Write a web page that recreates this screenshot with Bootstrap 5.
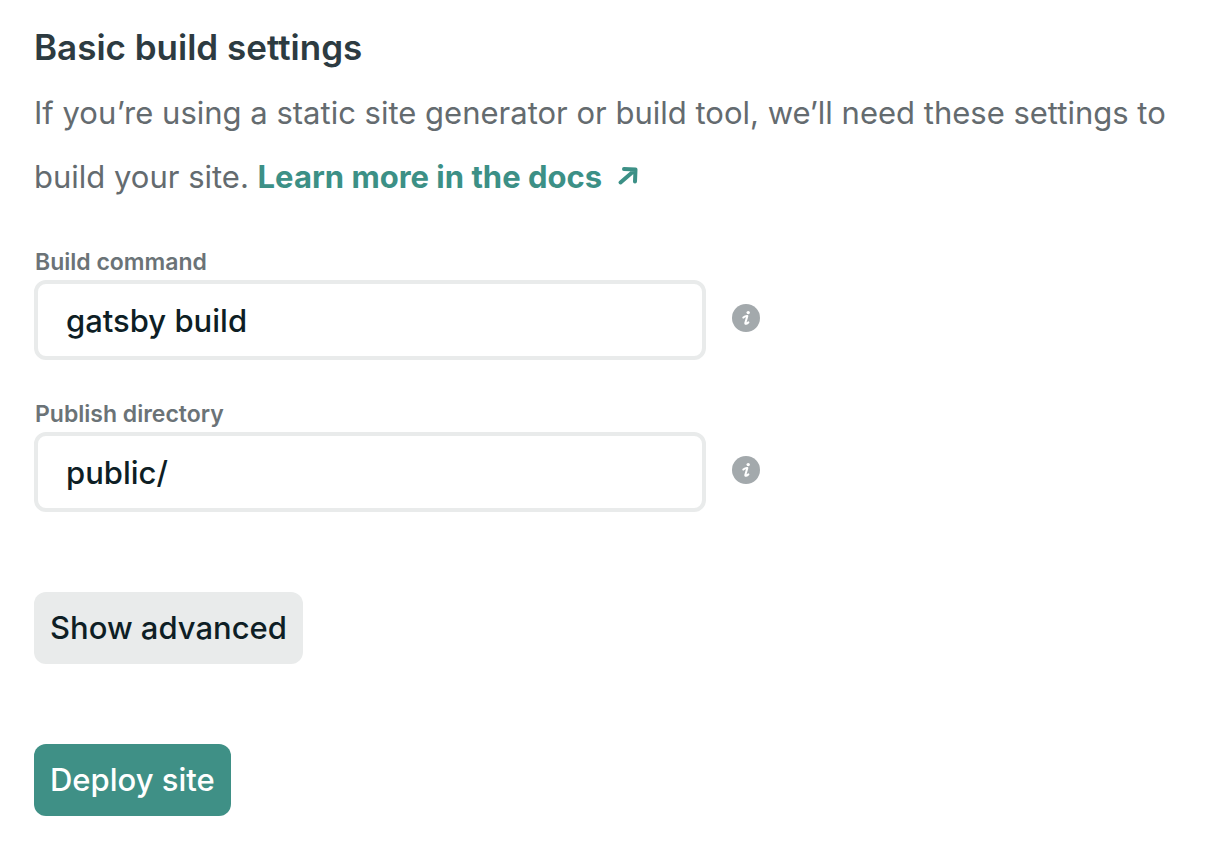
<!DOCTYPE html>
<html lang="en">
<head>
<meta charset="utf-8">
<meta name="viewport" content="width=device-width, initial-scale=1">
<title>Basic build settings</title>
<link href="https://cdn.jsdelivr.net/npm/bootstrap@5.3.0/dist/css/bootstrap.min.css" rel="stylesheet">
<style>
body{font-family:Inter,"Liberation Sans",sans-serif;font-size:31px;color:#646b6f;background:#fff}
.settings{padding:16px 34px 32px}
.settings-title{font-size:35px;line-height:62px;font-weight:600;color:#2d3b41;margin-bottom:3px}
.settings-intro{line-height:64px;margin:0 -16px 37px 0}
.docs-link{color:#3c9086;font-weight:700;text-decoration:none}
.docs-link:hover{color:#2f756d}
.docs-link svg{margin-left:8px;vertical-align:2px}
.field-label{font-size:23px;line-height:32px;font-weight:600;color:#6b7377;padding-left:1px;margin-bottom:2px}
.field-group{margin-bottom:38px}
.field-row{gap:26px}
.field-input{max-width:672px;height:80px;border:4px solid #e9ebeb;border-radius:12px;padding:0 28px;font-size:31px;font-weight:500;color:#0e1e25}
.field-input:focus{color:#0e1e25}
.info-btn{line-height:0;color:#a3a9ac;margin-bottom:4px}
.btn-site{font-size:31px;line-height:48px;font-weight:500;border:0;border-radius:12px;padding:12px 16px}
.btn-plain,.btn-plain:hover{background:#e9ebeb;color:#0e1e25}
.btn-deploy,.btn-deploy:hover{background:#3f9086;color:#fff}
.actions{gap:80px;padding-top:42px}
</style>
</head>
<body>
<main class="settings">
<h1 class="settings-title">Basic build settings</h1>
<p class="settings-intro">If you’re using a static site generator or build tool, we’ll need these settings to build your site. <a class="docs-link" href="#">Learn more in the docs<svg width="28" height="20" viewBox="-8 0 28 20" fill="none" stroke="currentColor" stroke-width="4" stroke-linecap="round" stroke-linejoin="round" aria-hidden="true"><path d="M6 3l11.500.5-.5 12M17 4 2.500 16.500"/></svg></a></p>
<form>
<div class="field-group">
<label class="field-label d-block" for="cmd">Build command</label>
<div class="field-row d-flex align-items-center">
<input id="cmd" class="form-control field-input" type="text" value="gatsby build">
<button type="button" class="info-btn btn border-0 p-0" aria-label="About the build command"><svg width="28" height="28" viewBox="0 0 28 28" aria-hidden="true"><circle cx="14" cy="14" r="14" fill="currentColor"/><circle cx="16.200" cy="8.600" r="1.700" fill="#fff"/><path d="M11.300 13.600Q13.500 11.800 15.300 12.100L13.300 19Q13 21 16.400 18.400" fill="none" stroke="#fff" stroke-width="2" stroke-linecap="round" stroke-linejoin="round"/></svg></button>
</div>
</div>
<div class="field-group">
<label class="field-label d-block" for="dir">Publish directory</label>
<div class="field-row d-flex align-items-center">
<input id="dir" class="form-control field-input" type="text" value="public/">
<button type="button" class="info-btn btn border-0 p-0" aria-label="About the publish directory"><svg width="28" height="28" viewBox="0 0 28 28" aria-hidden="true"><circle cx="14" cy="14" r="14" fill="currentColor"/><circle cx="16.200" cy="8.600" r="1.700" fill="#fff"/><path d="M11.300 13.600Q13.500 11.800 15.300 12.100L13.300 19Q13 21 16.400 18.400" fill="none" stroke="#fff" stroke-width="2" stroke-linecap="round" stroke-linejoin="round"/></svg></button>
</div>
</div>
<div class="actions d-flex flex-column align-items-start">
<button type="button" class="btn btn-site btn-plain">Show advanced</button>
<button type="submit" class="btn btn-site btn-deploy">Deploy site</button>
</div>
</form>
</main>
<script src="https://cdn.jsdelivr.net/npm/bootstrap@5.3.0/dist/js/bootstrap.bundle.min.js"></script>
</body>
</html>
